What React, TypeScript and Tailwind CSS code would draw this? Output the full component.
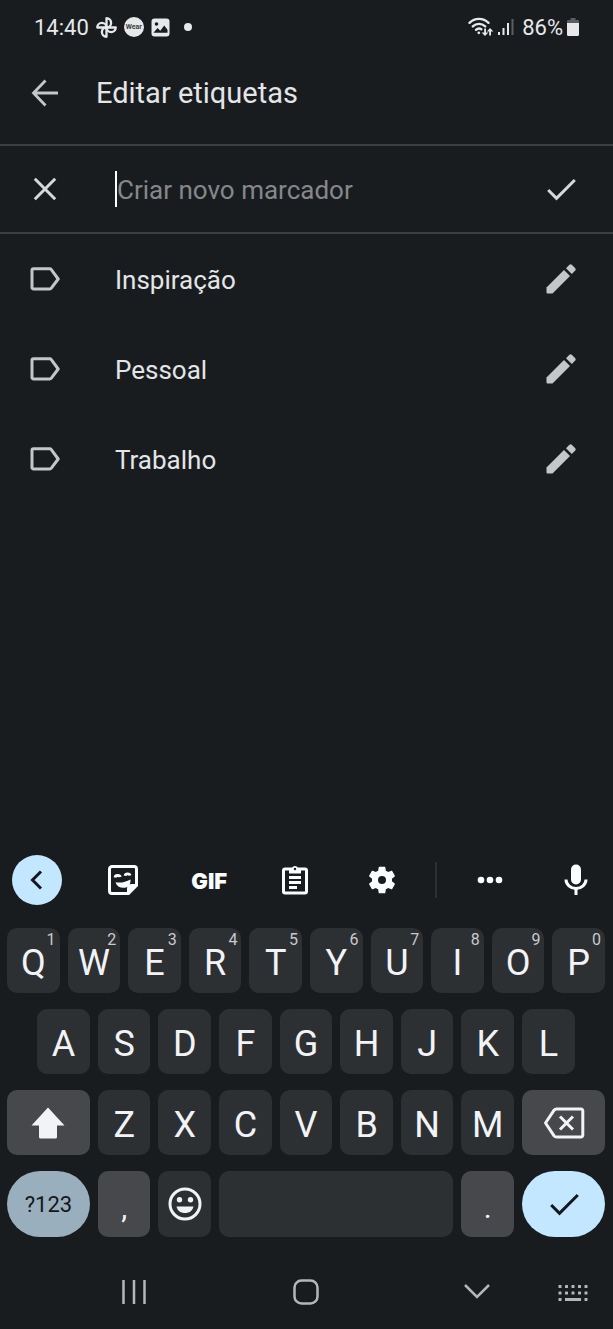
import type { ReactNode } from "react";

const labels = ["Inspiração", "Pessoal", "Trabalho"];

const topRow = "QWERTYUIOP".split("");
const homeRow = "ASDFGHJKL".split("");
const bottomRow = "ZXCVBNM".split("");

/* ---------- Icons ---------- */

const PinwheelIcon = () => (
  <svg width="21" height="21" viewBox="0 0 20 20" fill="none" stroke="currentColor" strokeWidth="2.2" strokeLinejoin="round">
    <path d="M10 1.2a4.4 4.4 0 0 1 0 8.8z" />
    <path d="M18.8 10a4.4 4.4 0 0 1-8.8 0z" />
    <path d="M10 18.8a4.4 4.4 0 0 1 0-8.8z" />
    <path d="M1.2 10a4.4 4.4 0 0 1 8.8 0z" />
  </svg>
);

const PictureIcon = () => (
  <svg width="19" height="19" viewBox="0 0 19 19">
    <rect x="0.5" y="0.5" width="18" height="18" rx="3" fill="currentColor" />
    <circle cx="5.5" cy="6" r="1.8" fill="#191c1f" />
    <path d="M2.5 14.8 6.5 10l2.8 2.8L13.2 7.5l3.3 4.2v3.1z" fill="#191c1f" />
  </svg>
);

const WifiIcon = () => (
  <svg width="26" height="22" viewBox="0 0 26 22" fill="none" stroke="currentColor" strokeWidth="2.4" strokeLinecap="round">
    <path d="M1.5 6.8a13.5 13.5 0 0 1 19 0" />
    <path d="M4.8 10.4a9 9 0 0 1 12.4 0" />
    <path d="M8 13.8a4.5 4.5 0 0 1 5.4-.6" />
    <circle cx="10.8" cy="16.8" r="1.4" fill="currentColor" stroke="none" />
    <path d="M16.2 12.5v4h-2.6l3.4 3.5 3.4-3.5h-2.4v-4z" fill="currentColor" stroke="none" />
    <path d="M21.2 19.5v-4h-2.4l3.2-3.5 3.4 3.5h-2.4v4z" fill="currentColor" stroke="none" />
  </svg>
);

const SignalIcon = () => (
  <svg width="16" height="18" viewBox="0 0 16 18">
    <path d="M0 14h2v3H0zM4.5 10h2v7h-2zM9 5h2v12H9z" fill="currentColor" />
    <path d="M13.5 1h2v16h-2z" fill="#5c5f62" />
  </svg>
);

const BatteryIcon = () => (
  <svg width="12" height="18" viewBox="0 0 12 18">
    <path d="M3.5 0h5v2H11a1 1 0 0 1 1 1v3H0V3a1 1 0 0 1 1-1h2.5z" fill="#5c5f62" />
    <path d="M0 5h12v11.5a1.5 1.5 0 0 1-1.5 1.5h-9A1.5 1.5 0 0 1 0 16.5z" fill="currentColor" />
  </svg>
);

const BackIcon = () => (
  <svg width="30" height="30" viewBox="0 0 30 30" fill="none" stroke="currentColor" strokeWidth="2.8">
    <path d="M28 15H4M15.5 2.5 3.5 15l12 12.5" />
  </svg>
);

const CloseIcon = () => (
  <svg width="30" height="30" viewBox="0 0 30 30" fill="none" stroke="currentColor" strokeWidth="3">
    <path d="M4.8 4.8l20.4 20.4M25.2 4.8 4.8 25.2" />
  </svg>
);

const CheckIcon = () => (
  <svg width="30" height="30" viewBox="0 0 30 30" fill="none" stroke="currentColor" strokeWidth="3">
    <path d="M2.2 16l8.3 8.3L28.8 6" />
  </svg>
);

const LabelIcon = () => (
  <svg width="30" height="30" viewBox="0 0 30 30" fill="none" stroke="currentColor" strokeWidth="3" strokeLinejoin="round">
    <path d="M3.5 4.8h16.2a2 2 0 0 1 1.6.8L28.2 15l-6.9 9.2a2 2 0 0 1-1.6.8H3.5A1.5 1.5 0 0 1 2 23.5V6.3a1.5 1.5 0 0 1 1.5-1.5z" />
  </svg>
);

const PencilIcon = () => (
  <svg width="30" height="30" viewBox="0 0 30 30" fill="currentColor">
    <path d="M.5 23.5 18 6l6 6L6.5 29.5h-5a1 1 0 0 1-1-1z" />
    <path d="M20 4.2 23.2 1a2 2 0 0 1 2.8 0L29 4a2 2 0 0 1 0 2.8L25.8 10z" />
  </svg>
);

const StickerIcon = () => (
  <svg width="32" height="32" viewBox="0 0 32 32" fill="none" stroke="currentColor" strokeWidth="3">
    <path d="M5 2.5h22A2.5 2.5 0 0 1 29.5 5v16.5l-8 8H5A2.5 2.5 0 0 1 2.5 27V5A2.5 2.5 0 0 1 5 2.5z" />
    <path d="M29 20.5h-5.5a3 3 0 0 0-3 3V29l8.5-8.5z" fill="currentColor" strokeWidth="1" />
    <path d="M8 13.5c.4-2.6 4.8-2.6 5.2-.4M18 11.8c.6-2.6 4.6-2.6 5-.4" strokeWidth="2.8" />
    <path d="M8.5 18.2c5 1 10 0 15-2.7.4 5-2.5 8.3-7 8.3-4 0-6.8-1.8-8-5.6z" fill="currentColor" stroke="none" />
  </svg>
);

const ClipboardIcon = () => (
  <svg width="28" height="32" viewBox="0 0 28 32" fill="none" stroke="currentColor" strokeWidth="3">
    <rect x="2.5" y="5" width="23" height="24" rx="1.5" />
    <path d="M8 4h3a3.2 3.2 0 0 1 6 0h3v5.5H8z" fill="currentColor" stroke="none" />
    <circle cx="14" cy="5" r="1.2" fill="#191c1f" stroke="none" />
    <path d="M8 13.5h12M8 18.5h12M8 23.5h8" strokeWidth="2.8" />
  </svg>
);

const GearIcon = () => (
  <svg width="32" height="32" viewBox="0 0 24 24" fill="currentColor">
    <path d="M19.5 12c0-.34-.03-.66-.07-.98l2.11-1.65c.19-.15.24-.42.12-.64l-2-3.46c-.12-.22-.39-.3-.61-.22l-2.49 1c-.52-.4-1.08-.73-1.69-.98l-.38-2.65A.49.49 0 0 0 14 2h-4c-.25 0-.46.18-.49.42l-.38 2.65c-.61.25-1.17.59-1.69.98l-2.49-1c-.23-.09-.49 0-.61.22l-2 3.46c-.13.22-.07.49.12.64l2.11 1.65c-.04.32-.07.65-.07.98s.03.66.07.98l-2.11 1.65c-.19.15-.24.42-.12.64l2 3.46c.12.22.39.3.61.22l2.49-1c.52.4 1.08.73 1.69.98l.38 2.65c.03.24.24.42.49.42h4c.25 0 .46-.18.49-.42l.38-2.65c.61-.25 1.17-.59 1.69-.98l2.49 1c.23.09.49 0 .61-.22l2-3.46c.12-.22.07-.49-.12-.64l-2.11-1.65c.04-.32.07-.64.07-.98zM12 15a3 3 0 1 1 0-6 3 3 0 0 1 0 6z" />
  </svg>
);

const MoreIcon = () => (
  <svg width="26" height="8" viewBox="0 0 26 8" fill="currentColor">
    <circle cx="4" cy="4" r="3.3" />
    <circle cx="13" cy="4" r="3.3" />
    <circle cx="22" cy="4" r="3.3" />
  </svg>
);

const MicIcon = () => (
  <svg width="26" height="32" viewBox="0 0 26 32" fill="none" stroke="currentColor" strokeWidth="3">
    <rect x="8" y="0.5" width="10" height="20" rx="5" fill="currentColor" stroke="none" />
    <path d="M3 15.5a10 9 0 0 0 20 0M13 24.5V31" />
  </svg>
);

const ShiftIcon = () => (
  <svg width="34" height="32" viewBox="0 0 34 32" fill="currentColor">
    <path d="M17 .5 33.5 18.500H26V30a1.5 1.5 0 0 1-1.5 1.5h-15A1.5 1.5 0 0 1 8 30V18.500H.5z" />
  </svg>
);

const BackspaceIcon = () => (
  <svg width="42" height="32" viewBox="0 0 42 32" fill="none" stroke="currentColor" strokeWidth="3" strokeLinejoin="round">
    <path d="M13.5 2H38a1.8 1.8 0 0 1 1.8 1.8v24.4A1.8 1.8 0 0 1 38 30H13.5a3 3 0 0 1-2.4-1.2L2.5 16l8.600-12.8A3 3 0 0 1 13.5 2z" />
    <path d="M17 9.5l13 13M30 9.5l-13 13" />
  </svg>
);

const EmojiIcon = () => (
  <svg width="34" height="34" viewBox="0 0 34 34">
    <circle cx="17" cy="17" r="15" fill="none" stroke="currentColor" strokeWidth="3" />
    <circle cx="11.5" cy="12.7" r="2.7" fill="currentColor" />
    <circle cx="22.5" cy="12.7" r="2.7" fill="currentColor" />
    <path d="M8.5 19.5h17c-1 4.5-4.3 6.5-8.5 6.5s-7.5-2-8.5-6.5z" fill="currentColor" />
  </svg>
);

/* ---------- Keyboard ---------- */

type KeyProps = {
  children?: ReactNode;
  label?: string;
  hint?: string;
  className?: string;
};

const Key = ({ children, label, hint, className = "col-span-2 rounded-[10px] bg-[#2d3033]" }: KeyProps) => (
  <button aria-label={label} className={`relative mx-1 flex items-center justify-center text-[#f1f3f6] ${className}`}>
    {children}
    {hint && <span className="absolute top-1 right-1 text-base leading-4 text-[#c8cacd]">{hint}</span>}
  </button>
);

const Letter = ({ value }: { value: string }) => <span className="pt-1 text-4xl leading-9">{value}</span>;

const ToolButton = ({ label, children }: { label: string; children: ReactNode }) => (
  <button aria-label={label} className="flex size-[50px] items-center justify-center text-[#fafcff]">
    {children}
  </button>
);

const Keyboard = () => (
  <section aria-label="Teclado">
    <div className="flex h-[50px] items-center justify-between px-3">
      <button aria-label="Voltar" className="flex size-[50px] items-center justify-center rounded-full bg-[#c2e7ff] text-[#14181c]">
        <svg width="20" height="20" viewBox="0 0 20 20" fill="none" stroke="currentColor" strokeWidth="3">
          <path d="M14 1.5 5.5 10l8.5 8.5" />
        </svg>
      </button>
      <ToolButton label="Figurinhas"><StickerIcon /></ToolButton>
      <button className="flex size-[50px] items-center justify-center pt-0.5 font-['Inter',sans-serif] text-[22px] font-black text-[#fafcff]">GIF</button>
      <ToolButton label="Área de transferência"><ClipboardIcon /></ToolButton>
      <ToolButton label="Configurações"><GearIcon /></ToolButton>
      <div className="-mx-2 h-9 w-0.5 bg-[#2d3033]" />
      <ToolButton label="Mais opções"><MoreIcon /></ToolButton>
      <ToolButton label="Digitação por voz"><MicIcon /></ToolButton>
    </div>

    <div className="mt-[23px] flex flex-col gap-4 pr-1 pl-[3px]">
      <div className="grid h-[65px] grid-cols-20">
        {topRow.map((key, i) => (
          <Key key={key} hint={String((i + 1) % 10)}><Letter value={key} /></Key>
        ))}
      </div>
      <div className="grid h-[65px] grid-cols-20">
        {homeRow.map((key, i) => (
          <Key
            key={key}
            className={i === 0 ? "col-span-2 col-start-2 rounded-[10px] bg-[#2d3033]" : undefined}
          >
            <Letter value={key} />
          </Key>
        ))}
      </div>
      <div className="grid h-[65px] grid-cols-20">
        <Key label="Shift" className="col-span-3 rounded-[10px] bg-[#46484b]"><ShiftIcon /></Key>
        {bottomRow.map((key) => (
          <Key key={key}><Letter value={key} /></Key>
        ))}
        <Key label="Apagar" className="col-span-3 rounded-[10px] bg-[#46484b]"><BackspaceIcon /></Key>
      </div>
      <div className="grid h-[66px] grid-cols-20">
        <Key className="col-span-3 rounded-full bg-[#9aafbd]">
          <span className="text-[22px] text-[#14181c]">?123</span>
        </Key>
        <Key className="col-span-2 rounded-[10px] bg-[#46484b]"><span className="pt-2 text-3xl">,</span></Key>
        <Key label="Emoji"><EmojiIcon /></Key>
        <Key label="Espaço" className="col-span-8 rounded-[10px] bg-[#2d3033]" />
        <Key className="col-span-2 rounded-[10px] bg-[#46484b]"><span className="pt-2 text-3xl">.</span></Key>
        <Key label="Concluir" className="col-span-3 rounded-full bg-[#c2e7ff]">
          <span className="text-[#14181c]"><CheckIcon /></span>
        </Key>
      </div>
    </div>
  </section>
);

/* ---------- Screen ---------- */

const StatusBar = () => (
  <div className="flex h-[54px] items-center justify-between px-[34px] text-[#e6e8ea]">
    <div className="flex items-center">
      <span className="text-[22px]">14:40</span>
      <div className="ml-[7px] flex items-center gap-[7px]">
        <PinwheelIcon />
        <span className="flex size-5 items-center justify-center rounded-full bg-[#e6e8ea] text-[7px] font-bold text-[#3c4043]">Wear</span>
        <PictureIcon />
      </div>
      <span className="ml-3.5 size-2 rounded-full bg-current" />
    </div>
    <div className="flex items-center">
      <WifiIcon />
      <span className="ml-1"><SignalIcon /></span>
      <span className="ml-2 text-[22px]">86%</span>
      <span className="ml-1"><BatteryIcon /></span>
    </div>
  </div>
);

const NavigationBar = () => (
  <nav className="mt-[37px] mb-[19px] flex h-9 items-center pr-5 pl-[114px] text-[#b4b6b9]">
    <div className="flex flex-1 items-center justify-between">
      <button aria-label="Recentes" className="flex w-10 justify-center">
        <svg width="26" height="26" viewBox="0 0 26 26" fill="none" stroke="currentColor" strokeWidth="2.5">
          <path d="M2.5 1v24M13 1v24M23.5 1v24" />
        </svg>
      </button>
      <button aria-label="Início" className="flex w-10 justify-center">
        <svg width="26" height="26" viewBox="0 0 26 26" fill="none" stroke="currentColor" strokeWidth="2.5">
          <rect x="1.5" y="1.5" width="23" height="23" rx="7" />
        </svg>
      </button>
      <button aria-label="Ocultar teclado" className="flex w-10 justify-center">
        <svg width="28" height="26" viewBox="0 0 28 26" fill="none" stroke="currentColor" strokeWidth="2.5">
          <path d="M2 6l12 12L26 6" />
        </svg>
      </button>
    </div>
    <button aria-label="Trocar teclado" className="ml-14 flex w-10 justify-center pt-1">
      <svg width="30" height="18" viewBox="0 0 30 18" fill="currentColor">
        {[1.5, 8, 14.5].map((y) =>
          [2, 8.5, 15, 21.5, 28]
            .filter((x) => y < 14 || x === 2 || x === 28)
            .map((x) => <rect key={`${x}-${y}`} x={x - 1.5} y={y - 1.5} width="3" height="3" rx="0.5" />)
        )}
        <rect x="7" y="13" width="16" height="3" />
      </svg>
    </button>
  </nav>
);

export default function App() {
  return (
    <div className="flex min-h-screen flex-col bg-[#191c1f] font-['Roboto','Liberation_Sans',sans-serif] text-[#e3e5e7]">
      <StatusBar />

      <header className="border-b-2 border-[#3c3f42] pb-3">
        <div className="flex h-[78px] items-center gap-9 px-[30px]">
          <button aria-label="Voltar" className="text-[#c4c6c8]"><BackIcon /></button>
          <h1 className="pt-0.5 text-[29px]">Editar etiquetas</h1>
        </div>
      </header>

      <main className="flex-1">
        <form className="flex h-[88px] items-center border-b-2 border-[#3c3f42] pr-[37px] pl-[30px]">
          <button type="button" aria-label="Cancelar" className="text-[#d6d8da]"><CloseIcon /></button>
          <span className="ml-[55px] h-9 w-0.5 bg-white" />
          <input
            type="text"
            aria-label="Criar novo marcador"
            placeholder="Criar novo marcador"
            className="h-10 min-w-0 flex-1 bg-transparent pt-0.5 text-[26px] outline-none placeholder:text-[#85888a]"
          />
          <button type="button" aria-label="Salvar" className="text-[#d6d8da]"><CheckIcon /></button>
        </form>

        <ul>
          {labels.map((label) => (
            <li key={label} className="flex h-[90px] items-center pr-[37px] pl-[30px] text-[#c4c6c8]">
              <LabelIcon />
              <span className="ml-[55px] flex-1 pt-0.5 text-[26px] text-[#e3e5e7]">{label}</span>
              <button aria-label={`Editar ${label}`}><PencilIcon /></button>
            </li>
          ))}
        </ul>
      </main>

      <Keyboard />
      <NavigationBar />
    </div>
  );
}
